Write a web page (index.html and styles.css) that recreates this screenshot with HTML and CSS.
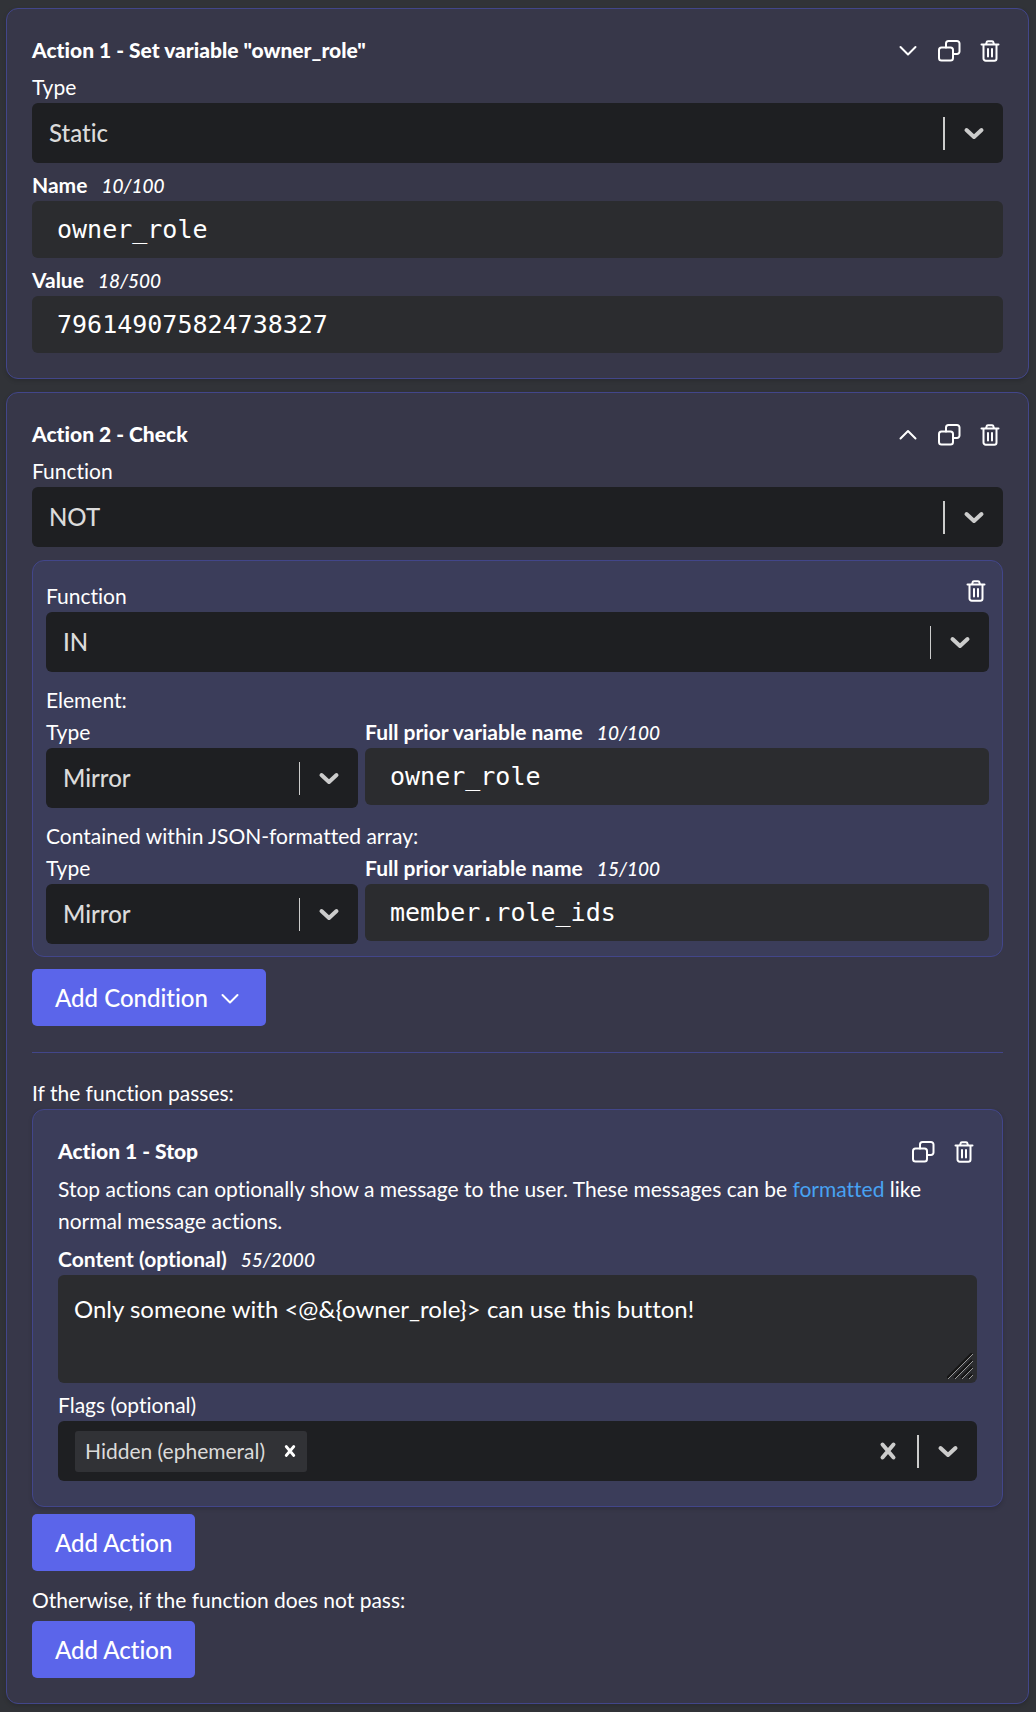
FILE: index.html
```html
<!DOCTYPE html>
<html lang="en">
<head>
<meta charset="utf-8">
<meta name="viewport" content="width=device-width, initial-scale=1">
<title>Actions</title>
<link rel="stylesheet" href="styles.css">
</head>
<body>
<svg class="sprite" aria-hidden="true">
  <symbol id="chevron-down" viewBox="0 0 26 26"><path d="M5.500 10 13 17.500l7.500-7.500"/></symbol>
  <symbol id="chevron-up" viewBox="0 0 26 26"><path d="M5.500 17.500 13 10l7.500 7.500"/></symbol>
  <symbol id="copy" viewBox="0 0 26 26"><rect x="3" y="10.500" width="14" height="13" rx="2.500"/><path d="M10 10.500V6.500A2.500 2.500 0 0 1 12.500 4h8.500a2.500 2.500 0 0 1 2.500 2.500v8a2.500 2.500 0 0 1-2.500 2.500h-4"/></symbol>
  <symbol id="trash" viewBox="0 0 26 26"><path d="M4.500 7.500h17M6.500 7.500v14a2.200 2.200 0 0 0 2.200 2.200h8.600a2.200 2.200 0 0 0 2.200-2.200v-14M9 7.500l.5-2A1.600 1.600 0 0 1 11 4.200h4a1.600 1.600 0 0 1 1.500 1.300l.5 2M11 12v7.500M15 12v7.500"/></symbol>
  <symbol id="caret" viewBox="0 0 26 26"><path d="M5.500 10 13 17l7.500-7"/></symbol>
  <symbol id="cross" viewBox="0 0 26 26"><path d="M7.500 6.500l11 13M18.500 6.500l-11 13"/></symbol>
</svg>
<main class="actions">
  <section class="card">
    <header class="card-header">
      <h2 class="title">Action 1 - Set variable "owner_role"</h2>
      <div class="tools">
        <button class="icon-button" type="button" aria-label="Move down"><svg class="icon"><use href="#chevron-down"/></svg></button>
        <button class="icon-button" type="button" aria-label="Duplicate"><svg class="icon"><use href="#copy"/></svg></button>
        <button class="icon-button" type="button" aria-label="Delete"><svg class="icon"><use href="#trash"/></svg></button>
      </div>
    </header>
    <div class="fields">
      <div class="field">
        <label class="label" for="type-1">Type</label>
        <div class="select-box">
          <select class="select" id="type-1"><option>Static</option></select>
          <span class="indicator"><svg class="icon caret"><use href="#caret"/></svg></span>
        </div>
      </div>
      <div class="field">
        <label class="label strong" for="name-1">Name <em class="count">10/100</em></label>
        <input class="input" id="name-1" type="text" value="owner_role">
      </div>
      <div class="field">
        <label class="label strong" for="value-1">Value <em class="count">18/500</em></label>
        <input class="input" id="value-1" type="text" value="796149075824738327">
      </div>
    </div>
  </section>

  <section class="card">
    <header class="card-header">
      <h2 class="title">Action 2 - Check</h2>
      <div class="tools">
        <button class="icon-button" type="button" aria-label="Move up"><svg class="icon"><use href="#chevron-up"/></svg></button>
        <button class="icon-button" type="button" aria-label="Duplicate"><svg class="icon"><use href="#copy"/></svg></button>
        <button class="icon-button" type="button" aria-label="Delete"><svg class="icon"><use href="#trash"/></svg></button>
      </div>
    </header>
    <div class="field">
      <label class="label" for="function-1">Function</label>
      <div class="select-box">
        <select class="select" id="function-1"><option>NOT</option></select>
        <span class="indicator"><svg class="icon caret"><use href="#caret"/></svg></span>
      </div>
    </div>

    <section class="condition">
      <div class="condition-header">
        <label class="label" for="function-2">Function</label>
        <button class="icon-button" type="button" aria-label="Delete condition"><svg class="icon"><use href="#trash"/></svg></button>
      </div>
      <div class="select-box">
        <select class="select" id="function-2"><option>IN</option></select>
        <span class="indicator thin"><svg class="icon caret"><use href="#caret"/></svg></span>
      </div>
      <p class="operand">Element:</p>
      <div class="pair">
        <div class="field">
          <label class="label" for="type-2">Type</label>
          <div class="select-box">
            <select class="select" id="type-2"><option>Mirror</option></select>
            <span class="indicator thin"><svg class="icon caret"><use href="#caret"/></svg></span>
          </div>
        </div>
        <div class="field">
          <label class="label strong" for="variable-1">Full prior variable name <em class="count">10/100</em></label>
          <input class="input" id="variable-1" type="text" value="owner_role">
        </div>
      </div>
      <p class="operand">Contained within JSON-formatted array:</p>
      <div class="pair">
        <div class="field">
          <label class="label" for="type-3">Type</label>
          <div class="select-box">
            <select class="select" id="type-3"><option>Mirror</option></select>
            <span class="indicator thin"><svg class="icon caret"><use href="#caret"/></svg></span>
          </div>
        </div>
        <div class="field">
          <label class="label strong" for="variable-2">Full prior variable name <em class="count">15/100</em></label>
          <input class="input" id="variable-2" type="text" value="member.role_ids">
        </div>
      </div>
    </section>
    <button class="button" type="button">Add Condition <svg class="icon"><use href="#chevron-down"/></svg></button>

    <hr class="rule">

    <p class="branch">If the function passes:</p>
    <section class="card nested">
      <header class="card-header">
        <h3 class="title">Action 1 - Stop</h3>
        <div class="tools">
          <button class="icon-button" type="button" aria-label="Duplicate"><svg class="icon"><use href="#copy"/></svg></button>
          <button class="icon-button" type="button" aria-label="Delete"><svg class="icon"><use href="#trash"/></svg></button>
        </div>
      </header>
      <div class="fields">
        <p class="hint">Stop actions can optionally show a message to the user. These messages can be <a class="link" href="#">formatted</a> like normal message actions.</p>
        <div class="field">
          <label class="label strong" for="content">Content (optional) <em class="count">55/2000</em></label>
          <div class="textarea-box">
            <textarea class="textarea" id="content">Only someone with &lt;@&amp;{owner_role}&gt; can use this button!</textarea>
            <svg class="grip" viewBox="0 0 26 26" aria-hidden="true"><path class="grip-dark" d="M0 25 25 0M7 25 25 7M14 25 25 14M21 25l4-4"/><path class="grip-light" d="M1 26 26 1M8 26 26 8M15 26 26 15M22 26l4-4"/></svg>
          </div>
        </div>
        <div class="field">
          <label class="label" for="flags">Flags (optional)</label>
          <div class="multi">
            <span class="chip">Hidden (ephemeral)<button class="chip-remove" type="button" aria-label="Remove Hidden (ephemeral)"><svg class="icon"><use href="#cross"/></svg></button></span>
            <input class="multi-input" id="flags" type="text" role="combobox" aria-expanded="false">
            <button class="icon-button clear" type="button" aria-label="Clear all"><svg class="icon"><use href="#cross"/></svg></button>
            <span class="indicator"><svg class="icon caret"><use href="#caret"/></svg></span>
          </div>
        </div>
      </div>
    </section>
    <button class="button snug" type="button">Add Action</button>
    <p class="branch otherwise">Otherwise, if the function does not pass:</p>
    <button class="button tight" type="button">Add Action</button>
  </section>
</main>
</body>
</html>
```
FILE: styles.css
```css
* {
  box-sizing: border-box;
}

body {
  margin: 0;
  background: #313338;
  color: #fff;
  font: 21px/32px Lato, "Open Sans", sans-serif;
  font-variant-ligatures: none;
}

h2,
h3,
p {
  margin: 0;
}

button,
input,
select,
textarea {
  margin: 0;
  border: 0;
  color: inherit;
  font: inherit;
  font-variant-ligatures: none;
}

button {
  padding: 0;
  background: none;
  cursor: pointer;
}

.sprite {
  display: none;
}

.icon {
  display: block;
  flex: none;
  width: 26px;
  height: 26px;
  fill: none;
  stroke: currentColor;
  stroke-width: 2;
  stroke-linecap: round;
  stroke-linejoin: round;
}

.actions {
  display: flex;
  flex-direction: column;
  gap: 13px;
  padding: 8px 7px 7px 6px;
}

.card {
  padding: 25px;
  border: 1px solid #42468a;
  border-radius: 12px;
  background: #373749;
  box-shadow: 0 2px 4px rgb(0 0 0 / 15%);
}

.nested,
.condition {
  background: #3b3d5a;
}

.card-header {
  display: flex;
  justify-content: space-between;
  align-items: center;
  margin-bottom: 5px;
}

.title {
  font-size: 21px;
  font-weight: 900;
}

.tools {
  display: flex;
  gap: 15px;
}

.icon-button {
  display: flex;
  align-items: center;
}

.fields {
  display: flex;
  flex-direction: column;
  gap: 6px;
}

.label {
  display: block;
}

.strong {
  font-weight: 700;
}

.count {
  margin-left: 9px;
  font-size: 19px;
  font-weight: 500;
  line-height: 1;
}

.select-box,
.textarea-box {
  display: grid;
}

.select-box > *,
.textarea-box > * {
  grid-area: 1 / 1;
}

.select {
  appearance: none;
  width: 100%;
  height: 60px;
  padding: 0 80px 0 17px;
  border-radius: 6px;
  background: #1e1f22;
  color: #dbdbdb;
  font-size: 24px;
  font-weight: 500;
}

.indicator {
  display: flex;
  align-items: center;
  justify-self: end;
  align-self: center;
  height: 33px;
  padding: 0 16px;
  border-left: 2px solid #ccc;
  color: #ccc;
  pointer-events: none;
}

.thin {
  border-left-width: 1px;
}

.caret {
  stroke-width: 4;
}

.input {
  display: block;
  width: 100%;
  height: 57px;
  padding: 0 25px;
  border-radius: 6px;
  background: #2b2c2f;
  font: 25px "DejaVu Sans Mono", monospace;
}

.condition {
  margin: 13px 0 12px;
  padding: 13px 13px 12px;
  border: 1px solid #42468a;
  border-radius: 12px;
}

.condition-header {
  display: flex;
  justify-content: space-between;
  align-items: flex-start;
}

.condition-header .label {
  padding-top: 6px;
}

.condition-header .icon-button {
  height: 32px;
}

.operand {
  margin-top: 12px;
}

.pair {
  display: grid;
  grid-template-columns: 1fr 2fr;
  gap: 7px;
}

.button {
  display: flex;
  align-items: center;
  gap: 9px;
  height: 57px;
  padding: 0 23px;
  border-radius: 5px;
  background: #5b65ea;
  font-size: 24px;
  font-weight: 500;
}

.rule {
  height: 1px;
  margin: 26px 0 24px;
  border: 0;
  background: #42468a;
}

.hint {
  padding-top: 1px;
}

.link {
  color: #48a2f2;
  text-decoration: none;
}

.textarea {
  display: block;
  width: 100%;
  height: 108px;
  padding: 18px 16px;
  border-radius: 6px;
  background: #2b2c2f;
  font-size: 24px;
  resize: none;
}

.grip {
  place-self: end;
  width: 26px;
  height: 26px;
  margin: 4px;
  fill: none;
  pointer-events: none;
}

.grip-dark {
  stroke: #151515;
  stroke-width: 2;
}

.grip-light {
  stroke: #999;
}

.multi {
  display: flex;
  align-items: center;
  height: 60px;
  padding-left: 17px;
  border-radius: 6px;
  background: #1e1f22;
}

.chip {
  display: flex;
  align-items: center;
  gap: 16px;
  height: 41px;
  padding: 0 8px 0 10px;
  border-radius: 3px;
  background: #313236;
  color: #dbdbdb;
}

.chip-remove {
  color: #fff;
}

.chip-remove .icon {
  width: 18px;
  height: 18px;
  stroke-width: 4;
}

.multi-input {
  flex: 1;
  min-width: 0;
  background: none;
  outline: 0;
}

.clear {
  margin-right: 16px;
  color: #ccc;
}

.clear .icon {
  stroke-width: 4;
}

.snug {
  margin-top: 7px;
}

.otherwise {
  margin-top: 13px;
}

.tight {
  margin-top: 5px;
}
```
